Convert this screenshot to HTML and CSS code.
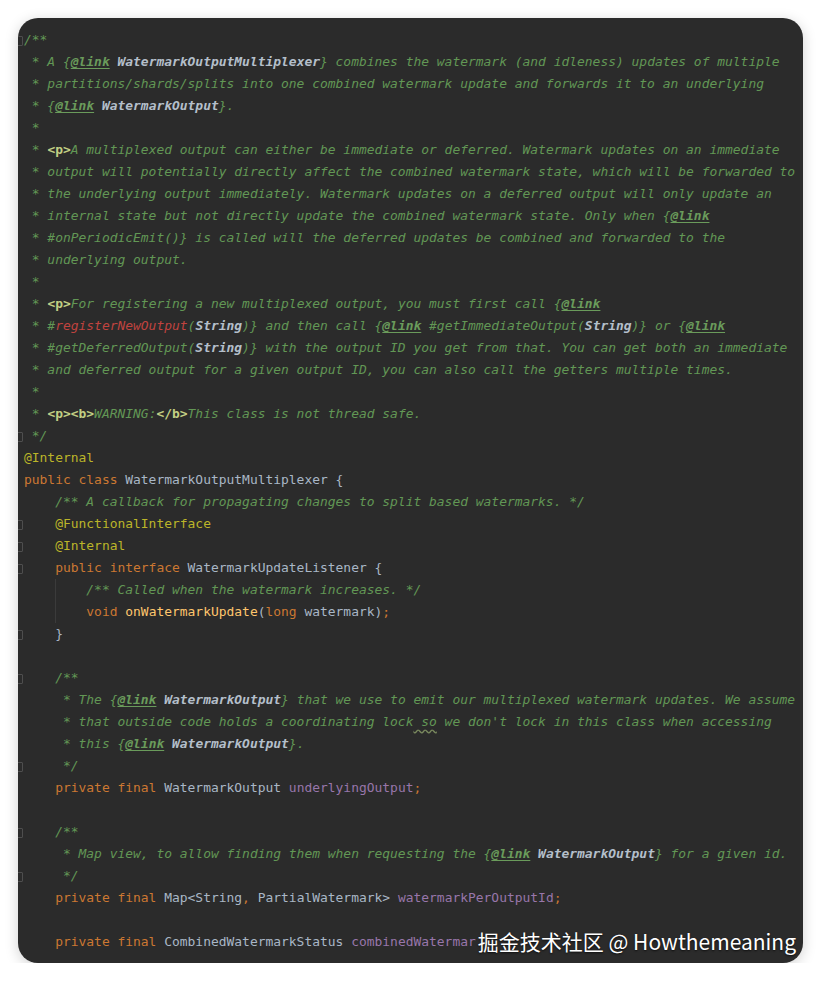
FILE: index.html
```html
<!DOCTYPE html>
<html>
<head>
<meta charset="utf-8">
<link rel="stylesheet" href="styles.css">
</head>
<body>
<div class="card">
<div class="code">
<div class="l f"><span class="c">/**</span></div>
<div class="l"><span class="c"> * A {<span class="dl">@link</span> <span class="dr">WatermarkOutputMultiplexer</span>} combines the watermark (and idleness) updates of multiple</span></div>
<div class="l"><span class="c"> * partitions/shards/splits into one combined watermark update and forwards it to an underlying</span></div>
<div class="l"><span class="c"> * {<span class="dl">@link</span> <span class="dr">WatermarkOutput</span>}.</span></div>
<div class="l"><span class="c"> *</span></div>
<div class="l"><span class="c"> * <span class="tg">&lt;p&gt;</span>A multiplexed output can either be immediate or deferred. Watermark updates on an immediate</span></div>
<div class="l"><span class="c"> * output will potentially directly affect the combined watermark state, which will be forwarded to</span></div>
<div class="l"><span class="c"> * the underlying output immediately. Watermark updates on a deferred output will only update an</span></div>
<div class="l"><span class="c"> * internal state but not directly update the combined watermark state. Only when {<span class="dl">@link</span></span></div>
<div class="l"><span class="c"> * #onPeriodicEmit()} is called will the deferred updates be combined and forwarded to the</span></div>
<div class="l"><span class="c"> * underlying output.</span></div>
<div class="l"><span class="c"> *</span></div>
<div class="l"><span class="c"> * <span class="tg">&lt;p&gt;</span>For registering a new multiplexed output, you must first call {<span class="dl">@link</span></span></div>
<div class="l"><span class="c"> * #<span class="err">registerNewOutput</span>(<span class="dr">String</span>)} and then call {<span class="dl">@link</span> #getImmediateOutput(<span class="dr">String</span>)} or {<span class="dl">@link</span></span></div>
<div class="l"><span class="c"> * #getDeferredOutput(<span class="dr">String</span>)} with the output ID you get from that. You can get both an immediate</span></div>
<div class="l"><span class="c"> * and deferred output for a given output ID, you can also call the getters multiple times.</span></div>
<div class="l"><span class="c"> *</span></div>
<div class="l"><span class="c"> * <span class="tg">&lt;p&gt;&lt;b&gt;</span>WARNING:<span class="tg">&lt;/b&gt;</span>This class is not thread safe.</span></div>
<div class="l f"><span class="c"> */</span></div>
<div class="l"><span class="an">@Internal</span></div>
<div class="l"><span class="kw">public class</span> WatermarkOutputMultiplexer {</div>
<div class="l">    <span class="c">/** A callback for propagating changes to split based watermarks. */</span></div>
<div class="l f"><span class="an">    @FunctionalInterface</span></div>
<div class="l f"><span class="an">    @Internal</span></div>
<div class="l f">    <span class="kw">public interface</span> WatermarkUpdateListener {</div>
<div class="l guide">        <span class="c">/** Called when the watermark increases. */</span></div>
<div class="l guide">        <span class="kw">void</span> <span class="fn">onWatermarkUpdate</span>(<span class="kw">long</span> watermark)<span class="kw">;</span></div>
<div class="l f">    }</div>
<div class="l"> </div>
<div class="l f">    <span class="c">/**</span></div>
<div class="l"><span class="c">     * The {<span class="dl">@link</span> <span class="dr">WatermarkOutput</span>} that we use to emit our multiplexed watermark updates. We assume</span></div>
<div class="l"><span class="c">     * that outside code holds a coordinating lock<span class="typo"> so</span> we don't lock in this class when accessing</span></div>
<div class="l"><span class="c">     * this {<span class="dl">@link</span> <span class="dr">WatermarkOutput</span>}.</span></div>
<div class="l f"><span class="c">     */</span></div>
<div class="l">    <span class="kw">private final</span> WatermarkOutput <span class="fd">underlyingOutput</span><span class="kw">;</span></div>
<div class="l"> </div>
<div class="l f">    <span class="c">/**</span></div>
<div class="l"><span class="c">     * Map view, to allow finding them when requesting the {<span class="dl">@link</span> <span class="dr">WatermarkOutput</span>} for a given id.</span></div>
<div class="l f"><span class="c">     */</span></div>
<div class="l">    <span class="kw">private final</span> Map&lt;String<span class="kw">,</span> PartialWatermark&gt; <span class="fd">watermarkPerOutputId</span><span class="kw">;</span></div>
<div class="l"> </div>
<div class="l">    <span class="kw">private final</span> CombinedWatermarkStatus <span class="fd">combinedWatermar</span></div>
</div>
<div class="wm">掘金技术社区 @ Howthemeaning</div>
</div>
</body>
</html>
```
FILE: styles.css
```css
html, body {
  margin: 0;
  padding: 0;
  background: #ffffff;
}

.card {
  position: relative;
  margin: 18px 0 0 18px;
  width: 785px;
  height: 945px;
  background: #2b2b2b;
  border-radius: 20px;
  overflow: hidden;
  box-shadow: 0 3px 14px rgba(0, 0, 0, 0.18);
}

.code {
  padding: 11px 0 0 6px;
  font-family: "DejaVu Sans Mono", "Liberation Mono", monospace;
  font-size: 12.95px;
  color: #a9b7c6;
}

.l {
  position: relative;
  height: 22px;
  line-height: 22px;
  white-space: pre;
}

.f::before {
  content: "";
  position: absolute;
  left: -10px;
  top: 7px;
  width: 7px;
  height: 8px;
  border: 1px solid #4e4e4e;
  border-radius: 1px;
}

.guide {
  background: linear-gradient(#3b3b3b, #3b3b3b) no-repeat 31px 0 / 1px 100%;
}

.c {
  color: #629755;
  font-style: italic;
}

.dl {
  font-weight: bold;
  text-decoration: underline;
  text-underline-offset: 2px;
  color: #6a9b5b;
}

.dr {
  color: #b4bfca;
  font-weight: bold;
}

.tg {
  color: #c2cf84;
  font-weight: bold;
  font-style: normal;
}

.err {
  color: #c0433f;
}

.typo {
  text-decoration: underline wavy #7a8a5e;
  text-underline-offset: 3px;
}

.kw {
  color: #cc7832;
}

.an {
  color: #bbb529;
}

.fn {
  color: #ffc66d;
}

.fd {
  color: #9876aa;
}

.wm {
  position: absolute;
  right: 7px;
  bottom: 7px;
  font-family: "Noto Sans CJK SC", "Noto Sans", sans-serif;
  font-size: 21px;
  line-height: 30px;
  color: #ffffff;
  text-shadow: 0 1px 2px rgba(0, 0, 0, 0.7);
}
```
